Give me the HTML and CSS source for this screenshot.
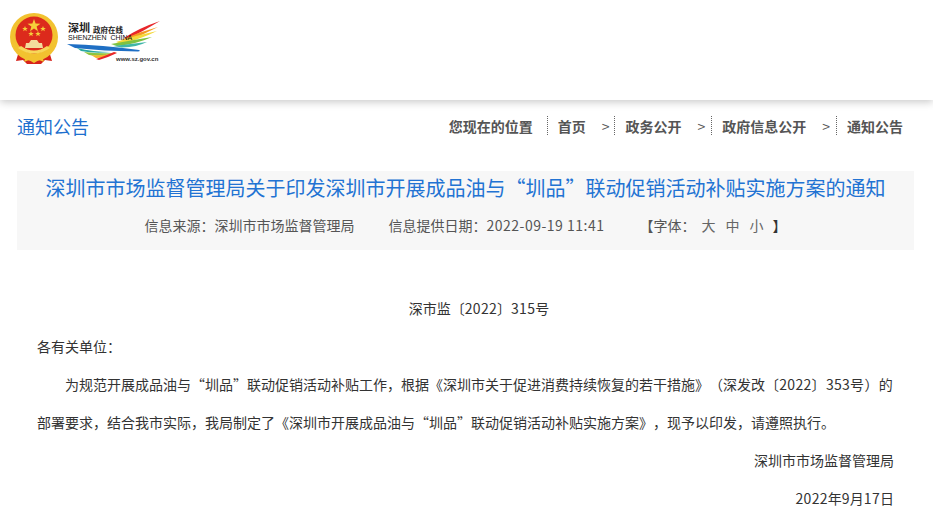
FILE: index.html
```html
<!DOCTYPE html>
<html lang="zh-CN">
<head>
    <meta charset="UTF-8">
    <meta name="viewport" content="width=device-width, initial-scale=1.0">
    <title>通知公告</title>
    <link rel="stylesheet" href="styles.css">
</head>
<body>

<!-- 页头 -->
<header class="site-header">
    <svg class="emblem" width="48" height="52" viewBox="0 0 48 52">
        <path d="M9 38 L6 48 L13 47 L17 51 L31 51 L35 47 L42 48 L39 38 Z" fill="#d6231c"/>
        <circle cx="24" cy="24" r="24" fill="#f2c230"/>
        <circle cx="24" cy="22" r="18.5" fill="#dc2a1c"/>
        <polygon points="24,6 25.6,10.6 30.5,10.7 26.6,13.6 28,18.3 24,15.5 20,18.3 21.4,13.6 17.5,10.7 22.4,10.6" fill="#f5cf3a"/>
        <polygon points="15,13 15.8,15 17.8,15 16.2,16.3 16.8,18.2 15,17 13.2,18.2 13.8,16.3 12.2,15 14.2,15" fill="#f5cf3a"/>
        <polygon points="33,13 33.8,15 35.8,15 34.2,16.3 34.8,18.2 33,17 31.2,18.2 31.8,16.3 30.2,15 32.2,15" fill="#f5cf3a"/>
        <polygon points="21,18 21.8,20 23.8,20 22.2,21.3 22.8,23.2 21,22 19.2,23.2 19.8,21.3 18.2,20 20.2,20" fill="#f5cf3a"/>
        <polygon points="28,18 28.8,20 30.8,20 29.2,21.3 29.8,23.2 28,22 26.2,23.2 26.8,21.3 25.2,20 27.2,20" fill="#f5cf3a"/>
        <path d="M19 30 L21 27 L27 27 L29 30 L32 30 L33 35 L15 35 L16 30 Z" fill="#f3dc9c"/>
        <path d="M8 35 Q24 46 40 35 L37 33 Q24 42 11 33 Z" fill="#f7d75a"/>
        <path d="M16 43 Q24 47 32 43 L34 49 L29 47 L24 50 L19 47 L14 49 Z" fill="#f2c230"/>
    </svg>
    <div class="city-logo">
        <svg width="94" height="44" viewBox="0 0 94 44">
            <path d="M93 1 Q72 8 57 18 L61 19 Q78 10 93 1 Z" fill="#e8262a"/>
            <path d="M91 7 Q72 12 54 20 L59 21 Q76 15 91 7 Z" fill="#f59a23"/>
            <path d="M90 11 Q70 15 49 22 L54 24 Q74 19 90 11 Z" fill="#f4d93a"/>
            <path d="M85 17 Q66 20 44 24 L50 26 Q70 24 85 17 Z" fill="#7ec242"/>
            <path d="M80 22 Q64 24 46 26 L55 27.5 Q70 27 80 22 Z" fill="#3fb6a8"/>
            <path d="M0 24 Q36 25 72 30 Q74 31 71 31.5 Q36 31 8 28 Z" fill="#1f6fc4"/>
            <path d="M10 28 Q26 32 44 32 Q28 34 14 31 Z" fill="#2aa9a0"/>
            <path d="M17 32 Q32 34 48 33 Q34 37 22 35 Z" fill="#8cc540"/>
            <path d="M24 35 Q36 36 50 32 Q40 38 29 38 Z" fill="#f2b62e"/>
            <path d="M29 39 Q38 36 47 32 L50 33 Q42 37 32 40 Z" fill="#e8262a"/>
        </svg>
        <span class="logo-cn">深圳</span>
        <span class="logo-gov">政府在线</span>
        <span class="logo-en">SHENZHEN&nbsp; CHINA</span>
        <span class="logo-url">www.sz.gov.cn</span>
    </div>
</header>

<main class="page">
    <!-- 栏目和面包屑 -->
    <div class="crumb-row">
        <h2 class="column-name">通知公告</h2>
        <nav class="crumbs">
            <span class="crumb-label">您现在的位置</span>
            <a class="crumb crumb-first" href="#">首页<i>&gt;</i></a>
            <a class="crumb" href="#">政务公开<i>&gt;</i></a>
            <a class="crumb" href="#">政府信息公开<i>&gt;</i></a>
            <a class="crumb crumb-last" href="#">通知公告</a>
        </nav>
    </div>

    <!-- 标题区 -->
    <section class="title-box">
        <h1>深圳市市场监督管理局关于印发深圳市开展成品油与“圳品”联动促销活动补贴实施方案的通知</h1>
        <div class="meta">
            <span>信息来源：深圳市市场监督管理局</span>
            <span class="meta-date">信息提供日期：<span class="meta-time">2022-09-19 11:41</span></span>
            <span class="meta-size">【字体：<b class="size-big">大</b><b>中</b><b>小</b><b class="size-end">】</b></span>
        </div>
    </section>

    <!-- 正文 -->
    <article class="content">
        <p class="doc-no">深市监〔<span class="num">2022</span>〕<span class="num">315</span>号</p>
        <p class="to">各有关单位：</p>
        <p class="body-text">为规范开展成品油与“圳品”联动促销活动补贴工作，根据《深圳市关于促进消费持续恢复的若干措施》（深发改<span class="num">〔2022〕353号）的</span>部署要求，结合我市实际，我局制定了《深圳市开展成品油与“圳品”联动促销活动补贴实施方案》，现予以印发，请遵照执行。</p>
        <p class="sign">深圳市市场监督管理局</p>
        <p class="sign"><span class="num">2022</span>年<span class="num">9</span>月<span class="num">17</span>日</p>
    </article>
</main>

</body>
</html>
```

FILE: styles.css
```css
/* 通用 */
body {
    margin: 0;
    font-family: "Noto Sans CJK SC", "Liberation Sans", sans-serif;
    color: #333;
    background: #fff;
    text-spacing-trim: space-all;
}

/* 页头 */
.site-header {
    height: 100px;
    box-sizing: border-box;
    padding: 13px 0 0 10px;
    display: flex;
    align-items: flex-start;
    gap: 9px;
    box-shadow: 0 2px 8px rgba(0, 0, 0, 0.22);
}

.emblem {
    flex: none;
}

.city-logo {
    position: relative;
    width: 94px;
    height: 50px;
    margin-top: 7px;
}

.city-logo svg {
    position: absolute;
    left: 0;
    top: 0;
}

.logo-cn {
    position: absolute;
    left: 1px;
    top: 1px;
    font-size: 11px;
    line-height: 13px;
    font-weight: bold;
    color: #222;
    white-space: nowrap;
}

.logo-gov {
    position: absolute;
    left: 26px;
    top: 6px;
    font-size: 7.5px;
    line-height: 8px;
    font-weight: bold;
    color: #222;
    white-space: nowrap;
}

.logo-en {
    position: absolute;
    left: 1px;
    top: 14px;
    font-family: "Liberation Sans", sans-serif;
    font-size: 7px;
    line-height: 7px;
    color: #111;
    white-space: nowrap;
}

.logo-url {
    position: absolute;
    left: 49px;
    top: 35px;
    font-family: "Liberation Sans", sans-serif;
    font-size: 6px;
    font-weight: bold;
    line-height: 8px;
    color: #333;
}

/* 栏目和面包屑 */
.page {
    padding: 0 19px 0 17px;
}

.crumb-row {
    height: 52px;
    display: flex;
    justify-content: space-between;
    align-items: center;
}

.column-name {
    margin: 0;
    font-size: 18px;
    font-weight: normal;
    color: #1d6fce;
}

.crumbs {
    display: flex;
    align-items: center;
    font-size: 14px;
    font-weight: bold;
    line-height: 20px;
    color: #555;
    margin: 0 11px 1px 0;
}

.crumb-label {
    padding-right: 14px;
}

.crumb {
    display: flex;
    align-items: center;
    height: 19px;
    box-sizing: border-box;
    padding: 0 6px 0 10px;
    color: #555;
    text-decoration: none;
    border-left: 1px dotted #666;
}

.crumb i {
    font-style: normal;
    font-weight: normal;
    margin-left: 16px;
}

.crumb-first {
    padding-right: 5px;
}

.crumb-last {
    padding-right: 0;
}

/* 标题区 */
.title-box {
    height: 79px;
    margin-top: 19px;
    background: #f7f7f7;
    text-align: center;
}

.title-box h1 {
    margin: 0;
    padding-top: 4px;
    font-size: 20px;
    line-height: 26px;
    font-weight: normal;
    color: #2273d3;
}

.meta {
    display: flex;
    justify-content: center;
    margin-top: 14px;
    font-size: 14px;
    line-height: 20px;
    color: #555;
}

.meta-date {
    margin-left: 34px;
}

.meta-time {
    letter-spacing: 0.5px;
}

.meta-size {
    margin-left: 35px;
}

.meta-size b {
    font-weight: normal;
    color: #666;
    margin-left: 10px;
}

.meta-size .size-big {
    margin-left: 6px;
}

.meta-size .size-end {
    margin-left: 9px;
    color: #333;
}

/* 正文 */
.content {
    margin-top: 39px;
    font-size: 14px;
    line-height: 38px;
    color: #333;
}

.content p {
    margin: 0;
}

.num {
    letter-spacing: 0.3px;
}

.doc-no {
    text-align: center;
    padding-left: 27px;
}

.to {
    padding-left: 20px;
}

.body-text {
    padding: 0 20px;
    text-indent: 28px;
}

.sign {
    text-align: right;
    padding-right: 20px;
}
```
